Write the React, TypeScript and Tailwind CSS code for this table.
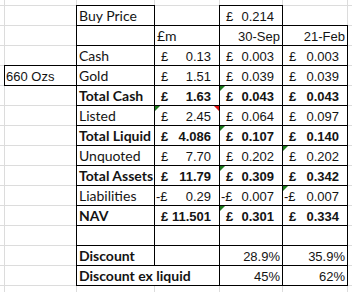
import type { ReactNode } from 'react'

type Cell = {
  t?: ReactNode
  box?: boolean
  span?: number
  cls?: string
  green?: boolean
  red?: boolean
}

const label = "font-['Lato',sans-serif] text-[14px] pl-[2px]"
const num = "font-['Liberation_Sans',Arial,sans-serif] text-[13px]"

function acct(v: string, opts: { bold?: boolean; neg?: boolean; green?: boolean; red?: boolean } = {}): Cell {
  return {
    box: true,
    green: opts.green,
    red: opts.red,
    t: (
      <div className={`flex w-full justify-between ${opts.neg ? 'pl-[1px]' : 'pl-[6px]'} pr-[8px] ${opts.bold ? 'font-bold' : ''}`}>
        <span>{opts.neg ? '-£' : '£'}</span>
        <span>{v}</span>
      </div>
    ),
    cls: num,
  }
}

const lab = (t: string, bold = false): Cell => ({ t, box: true, cls: `${label} ${bold ? 'font-bold' : ''}` })
const right = (t: string, bold = false): Cell => ({
  t,
  box: true,
  cls: `${num} justify-end pr-[2px] ${bold ? 'font-bold' : ''}`,
})
const blank: Cell = {}
const boxed: Cell = { box: true }

const rows: Cell[][] = [
  [blank, blank, blank, blank, blank, blank, blank],
  [blank, blank, lab('Buy Price'), blank, acct('0.214'), blank, blank],
  [blank, blank, boxed, lab('£m'), right('30-Sep'), right('21-Feb'), blank],
  [blank, blank, lab('Cash'), acct('0.13'), acct('0.003'), acct('0.003'), blank],
  [blank, { t: '660 Ozs', box: true, cls: `${num} pl-[1px]` }, lab('Gold'), acct('1.51'), acct('0.039'), acct('0.039'), blank],
  [blank, blank, lab('Total Cash', true), acct('1.63', { bold: true }), acct('0.043', { bold: true, green: true }), acct('0.043', { bold: true }), blank],
  [blank, blank, lab('Listed'), acct('2.45', { green: true, red: true }), acct('0.064'), acct('0.097'), blank],
  [blank, blank, lab('Total Liquid', true), acct('4.086', { bold: true }), acct('0.107', { bold: true, green: true }), acct('0.140', { bold: true }), blank],
  [blank, blank, lab('Unquoted'), acct('7.70'), acct('0.202'), acct('0.202', { green: true }), blank],
  [blank, blank, lab('Total Assets', true), acct('11.79', { bold: true }), acct('0.309', { bold: true, green: true }), acct('0.342', { bold: true }), blank],
  [blank, blank, lab('Liabilities'), acct('0.29', { neg: true }), acct('0.007', { neg: true }), acct('0.007', { neg: true, green: true }), blank],
  [blank, blank, lab('NAV', true), acct('11.501', { bold: true }), acct('0.301', { bold: true, green: true }), acct('0.334', { bold: true }), blank],
  [blank, blank, boxed, boxed, boxed, boxed, blank],
  [blank, blank, lab('Discount', true), boxed, right('28.9%'), right('35.9%'), blank],
  [blank, blank, { ...lab('Discount ex liquid', true), span: 2 }, right('45%'), right('62%'), blank],
  [blank, blank, blank, blank, blank, blank, blank],
]

export default function App() {
  return (
    <div className="grid h-[292px] w-[352px] grid-cols-[4px_71px_77px_64px_62px_64px_4px] grid-rows-[5px_repeat(14,19px)_6px] gap-px overflow-hidden bg-[#dcdcdc] text-[#141414]">
      {rows.map((row, r) =>
        row.map((c, i) => (
          <div
            key={`${r}-${i}`}
            className={`relative flex items-end whitespace-nowrap bg-white pb-[2px] leading-none ${
              c.span === 2 ? 'col-span-2' : ''
            } ${c.box ? 'z-10 shadow-[0_0_0_1px_#000]' : ''} ${c.cls ?? ''}`}
          >
            {c.t}
            {c.green && (
              <span className="absolute left-0 top-0 h-0 w-0 border-r-[5px] border-t-[5px] border-r-transparent border-t-[#1e7b1e]" />
            )}
            {c.red && (
              <span className="absolute right-0 top-0 h-0 w-0 border-l-[5px] border-t-[5px] border-l-transparent border-t-[#e01010]" />
            )}
          </div>
        ))
      )}
    </div>
  )
}
